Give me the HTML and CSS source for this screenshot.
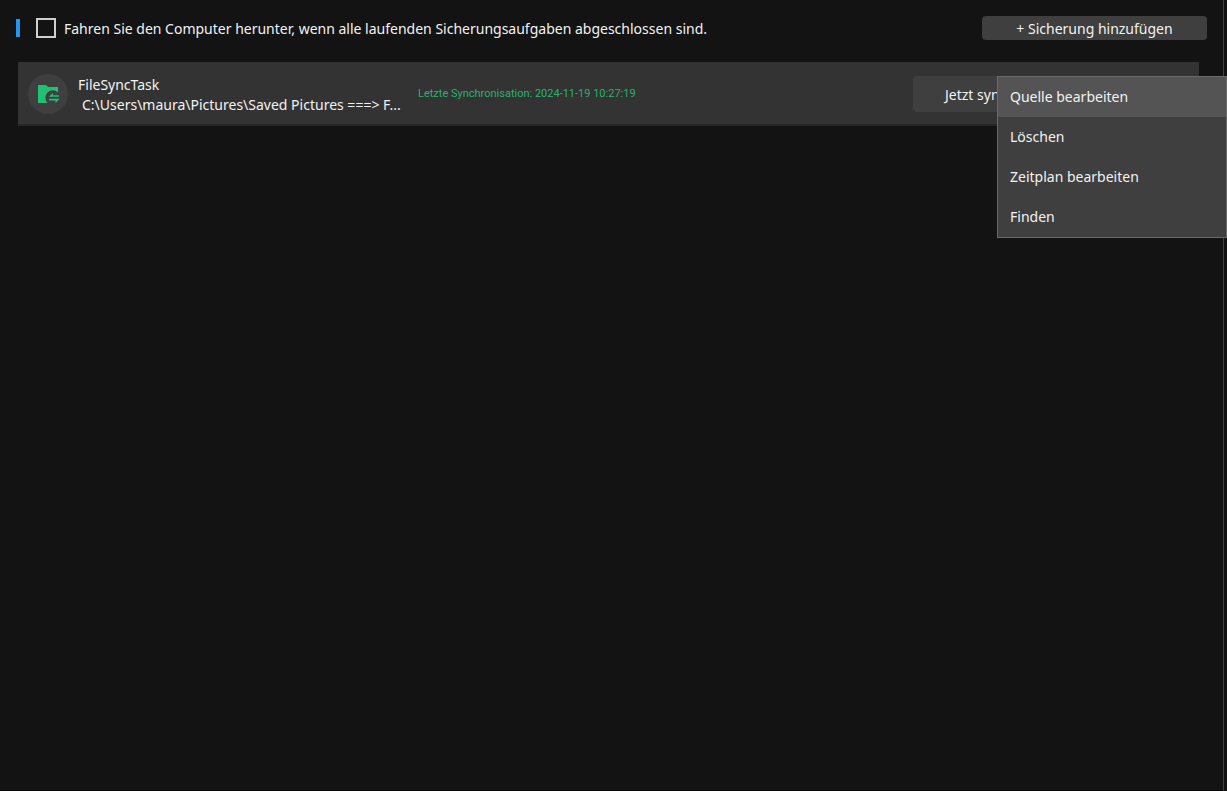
FILE: index.html
```html
<!DOCTYPE html>
<html lang="de">
<head>
<meta charset="utf-8">
<meta name="viewport" content="width=device-width, initial-scale=1">
<title>Sicherung</title>
<link rel="stylesheet" href="styles.css">
</head>
<body>
<main class="app">
  <header class="toolbar">
    <label class="shutdown">
      <input class="shutdown-box" type="checkbox">
      <span class="shutdown-label">Fahren Sie den Computer herunter, wenn alle laufenden Sicherungsaufgaben abgeschlossen sind.</span>
    </label>
    <button class="add-button" type="button">+ Sicherung hinzufügen</button>
  </header>
  <section class="task">
    <span class="task-icon">
      <svg width="22" height="20" viewBox="0 0 22 20" aria-hidden="true">
        <path fill="#1fc173" d="M0 1h8l2 2h10v5.500A7 7 0 0 0 9.600 19H0z"/>
        <path fill="#1fc173" d="M11 12.600l4-3.600v2.200h6v1.600H11zM11 14.700h10.500l-4 4.500v-2.800H11z"/>
      </svg>
    </span>
    <div class="task-text">
      <div class="task-name">FileSyncTask</div>
      <div class="task-path">C:\Users\maura\Pictures\Saved Pictures ===&gt; F...</div>
    </div>
    <div class="task-status">Letzte Synchronisation: 2024-11-19 10:27:19</div>
    <button class="sync-button" type="button">Jetzt synchronisieren</button>
    <div class="menu" role="menu">
      <button class="menu-item active" type="button" role="menuitem">Quelle bearbeiten</button>
      <button class="menu-item" type="button" role="menuitem">Löschen</button>
      <button class="menu-item" type="button" role="menuitem">Zeitplan bearbeiten</button>
      <button class="menu-item" type="button" role="menuitem">Finden</button>
    </div>
  </section>
</main>
</body>
</html>
```
FILE: styles.css
```css
* {
  box-sizing: border-box;
}

body {
  margin: 0;
  padding-right: 3px;
  background: #111111;
  color: #f2f2f2;
  font: 14px/20px "Noto Sans", "Open Sans", sans-serif;
}

button {
  border: 0;
  color: inherit;
  font: inherit;
}

.app {
  min-height: 100vh;
  padding: 16px 24px 0 16px;
  border-right: 1px solid #404040;
  border-bottom: 1px solid #080808;
  background: #131313;
}

.toolbar {
  display: flex;
  align-items: center;
  justify-content: space-between;
  margin-right: -8px;
}

.shutdown {
  display: flex;
  align-items: center;
  gap: 8px;
}

.shutdown::before {
  content: "";
  width: 4px;
  height: 18px;
  margin-right: 8px;
  background: #2196f3;
}

.shutdown-box {
  appearance: none;
  width: 20px;
  height: 20px;
  margin: 0;
  border: 2px solid #cfcfcf;
}

.shutdown-label {
  padding-top: 2px;
}

.add-button {
  width: 225px;
  height: 24px;
  padding: 2px 0 0;
  border-radius: 4px;
  background: #3f3f3f;
}

.task {
  position: relative;
  display: flex;
  align-items: center;
  height: 64px;
  margin: 22px 0 0 2px;
  padding: 2px 62px 0 10px;
  border-bottom: 2px solid #262626;
  background: #333333;
}

.task-icon {
  display: grid;
  place-items: center;
  width: 40px;
  height: 40px;
  padding-left: 2px;
  border-radius: 50%;
  background: #3f3f3f;
}

.task-text {
  width: 350px;
  padding: 2px 0 0 10px;
  white-space: nowrap;
}

.task-path {
  padding-left: 4px;
}

.task-status {
  flex: 1;
  color: #27b26c;
  font-family: Roboto, "Noto Sans", sans-serif;
  font-size: 11px;
}

.sync-button {
  width: 224px;
  height: 36px;
  padding: 2px 0 0 32px;
  border-radius: 4px;
  background: #3f3f3f;
  text-align: left;
}

.menu {
  position: absolute;
  top: 14px;
  right: -28px;
  display: flex;
  flex-direction: column;
  width: 230px;
  border: 1px solid #6a6a6a;
  background: #3f3f3f;
}

.menu-item {
  height: 40px;
  padding: 0 12px;
  background: transparent;
  text-align: left;
}

.menu-item.active {
  background: #545454;
}
```
